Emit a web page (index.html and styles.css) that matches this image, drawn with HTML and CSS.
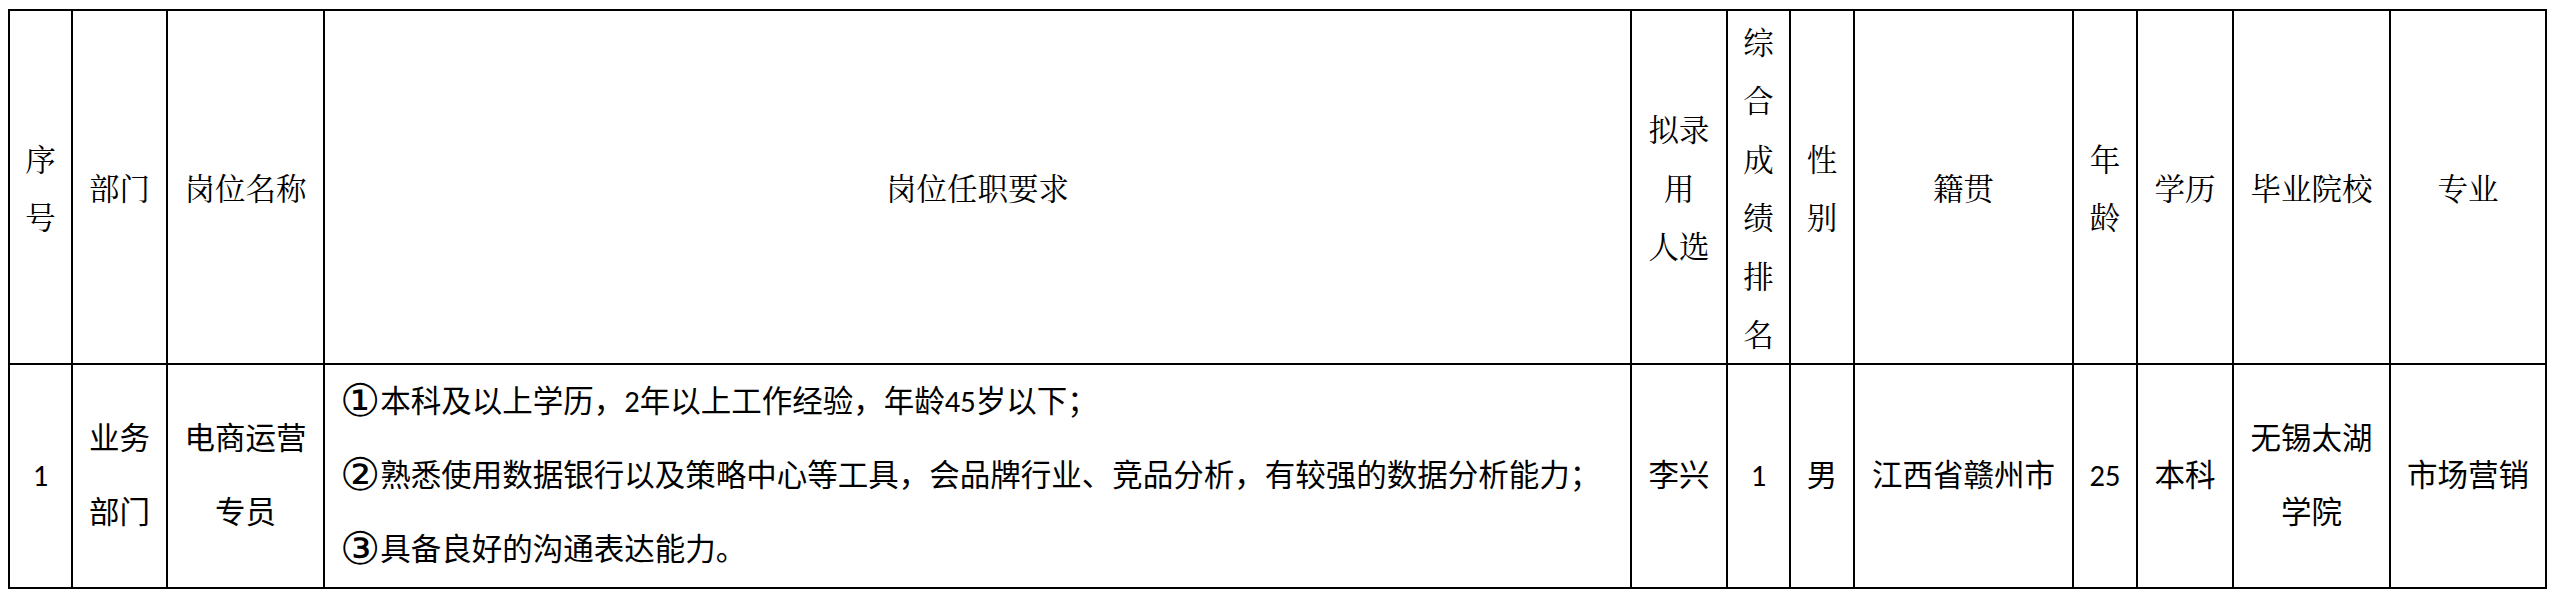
FILE: index.html
```html
<!DOCTYPE html>
<html lang="zh-CN">
<head>
<meta charset="utf-8">
<title>拟录用人员公示</title>
<link rel="stylesheet" href="styles.css">
</head>
<body>
<div class="page">
  <div class="sheet">
    <div class="cell head">序<br>号</div>
    <div class="cell head">部门</div>
    <div class="cell head">岗位名称</div>
    <div class="cell head">岗位任职要求</div>
    <div class="cell head">拟录<br>用<br>人选</div>
    <div class="cell head">综<br>合<br>成<br>绩<br>排<br>名</div>
    <div class="cell head">性<br>别</div>
    <div class="cell head">籍贯</div>
    <div class="cell head">年<br>龄</div>
    <div class="cell head">学历</div>
    <div class="cell head">毕业院校</div>
    <div class="cell head">专业</div>

    <div class="cell data">1</div>
    <div class="cell data">业务<br>部门</div>
    <div class="cell data">电商运营<br>专员</div>
    <div class="cell data req">
      <div><span class="num">①</span>本科及以上学历，2年以上工作经验，年龄45岁以下；</div>
      <div><span class="num">②</span>熟悉使用数据银行以及策略中心等工具，会品牌行业、竞品分析，有较强的数据分析能力；</div>
      <div><span class="num">③</span>具备良好的沟通表达能力。</div>
    </div>
    <div class="cell data">李兴</div>
    <div class="cell data">1</div>
    <div class="cell data">男</div>
    <div class="cell data">江西省赣州市</div>
    <div class="cell data">25</div>
    <div class="cell data">本科</div>
    <div class="cell data">无锡太湖<br>学院</div>
    <div class="cell data">市场营销</div>
  </div>
</div>
</body>
</html>
```

FILE: styles.css
```css
html, body {
  margin: 0;
  padding: 0;
  background: #ffffff;
}

.page {
  padding: 9px 0 0 8px;
}

.sheet {
  display: grid;
  grid-template-columns: 63px 95px 157px 1307px 96px 63px 64px 219px 64px 96px 157px 156px;
  grid-template-rows: 354px 224px;
  width: max-content;
  border-left: 2px solid #000;
  border-top: 2px solid #000;
  color: #000;
}

.cell {
  box-sizing: border-box;
  border-right: 2px solid #000;
  border-bottom: 2px solid #000;
  display: flex;
  flex-direction: column;
  align-items: center;
  justify-content: center;
  text-align: center;
  font-size: 30.5px;
  white-space: nowrap;
}

.head {
  font-family: "Noto Serif CJK SC", "Noto Sans CJK SC", serif;
  line-height: 58.5px;
}

.data {
  font-family: "Carlito", "Noto Sans CJK SC", sans-serif;
  line-height: 74px;
}

.req {
  align-items: flex-start;
  text-align: left;
  padding-left: 15px;
}

.num {
  font-family: "DejaVu Sans", sans-serif;
  font-size: 45px;
  line-height: 1;
  vertical-align: -4px;
}
```
